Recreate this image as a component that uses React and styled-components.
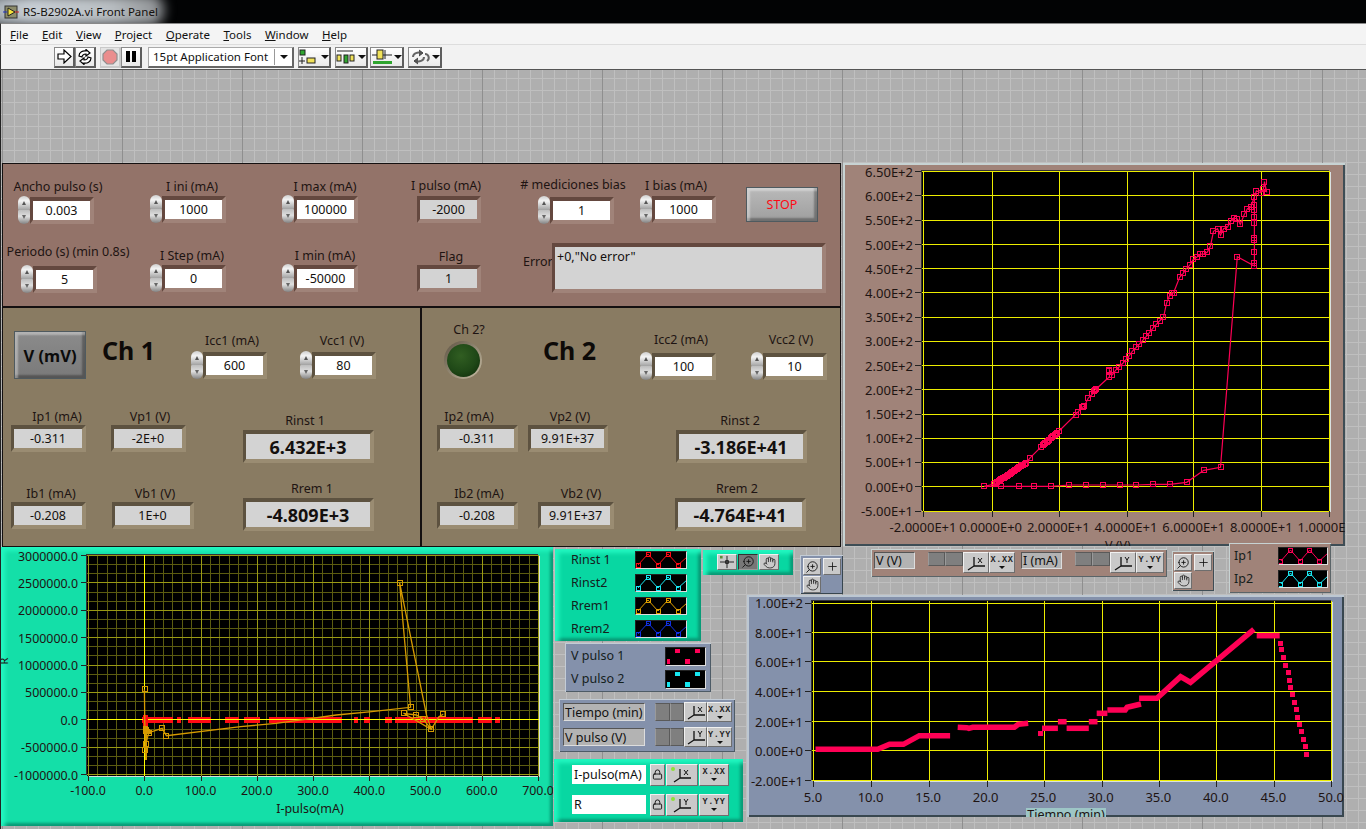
import React from "react";
import styled, { createGlobalStyle } from "styled-components";
import { Hand, ZoomIn, Plus, Lock } from "lucide-react";

const Global = createGlobalStyle`
  html, body { margin: 0; padding: 0; background: #000; overflow: hidden; }
  #root { width: 1366px; height: 829px; }
  * { box-sizing: border-box; }
`;

const FONT = `"Noto Sans", "Open Sans", sans-serif`;
const TRACE = "#ff0055";

const Screen = styled.div`
  width: 1366px; height: 829px; display: flex; flex-direction: column;
  font-family: ${FONT}; font-size: 12.5px; color: #1c1210; background: #000; overflow: hidden;
`;
const TitleBar = styled.div`
  position: relative; height: 23px; flex: none; background: #020304; display: flex; align-items: center;
  padding-left: 3px; gap: 4px; overflow: hidden;
`;
const TitleGlow = styled.div`
  position: absolute; left: -14px; top: -6px; width: 178px; height: 32px; border-radius: 14px;
  background: linear-gradient(90deg, #9fa7ad, #c8cfd6 25%, #b9bec2 70%, #8a8d90);
  filter: blur(6px);
`;
const TitleIcon = styled.svg` position: relative; flex: none; `;
const TitleText = styled.span`
  position: relative; font-size: 11.5px; color: #15110e; white-space: nowrap;
`;
const MenuBar = styled.div`
  height: 21px; flex: none; background: #f4f4f4; display: flex; align-items: center; padding-left: 9px; gap: 13.5px;
  border-left: 1px solid #333; border-top: 1px solid #888;
`;
const MenuItem = styled.span`
  font-size: 11.5px; color: #111; &::first-letter { text-decoration: underline; }
`;
const ToolBar = styled.div`
  height: 26px; flex: none; background: #f2f2f2; display: flex; align-items: center; padding-left: 53px;
  border-left: 1px solid #333; border-top: 1px solid #ddd; border-bottom: 1px solid #555;
`;
const ToolButton = styled.div`
  width: ${p => p.$w || 21}px; height: 21px; margin-left: ${p => p.$ml || 0}px; flex: none;
  background: ${p => p.$off ? "#e4e4e4" : "linear-gradient(#ffffff, #e9e9e9)"};
  border: 1px solid ${p => p.$off ? "#c9c9c9" : "#8a8a8a"}; border-right: 2px solid ${p => p.$off ? "#c9c9c9" : "#5e5e5e"}; border-bottom: 2px solid ${p => p.$off ? "#c9c9c9" : "#5e5e5e"};
  display: flex; align-items: center; justify-content: center;
`;
const FontSelect = styled.div`
  width: 146px; height: 21px; margin-left: 6px; flex: none; background: #fff; display: flex; align-items: center;
  border: 1px solid #aaa; border-right: 2px solid #666; border-bottom: 2px solid #666; padding-left: 4px; font-size: 11.5px; color: #111;
`;
const FontSelectText = styled.span` flex: 1; white-space: nowrap; `;
const FontSelectArrow = styled.span`
  width: 18px; height: 16px; border-left: 1px solid #999; display: flex; align-items: center; justify-content: center;
`;
const DownArrow = styled.span`
  width: 0; height: 0; border-left: 4px solid transparent; border-right: 4px solid transparent; border-top: 4px solid #111;
`;

const Canvas = styled.div`
  position: relative; flex: 1; background-color: #afafaf;
  border-left: 1px solid #222;
  background-image:
    linear-gradient(to right, #8f8f8f 1px, transparent 1px),
    linear-gradient(to right, #bfbfbf 1px, transparent 1px),
    linear-gradient(to bottom, #bfbfbf 1px, transparent 1px);
  background-size: 120px 120px, 12px 12px, 12px 12px;
  background-position: 1px 0, 1px 0, 0 8px;
`;
/* A panel is a floating object on the LabVIEW front-panel canvas: its place on the canvas is the content. */
const Panel = styled.div`
  position: absolute; left: ${p => p.$x - 1}px; top: ${p => p.$y - 70}px; width: ${p => p.$w}px; height: ${p => p.$h}px;
  background: ${p => p.$bg}; box-shadow: ${p => p.$shadow || "none"}; overflow: hidden;
`;
const raised = (l, d, n = 2) => `inset ${n}px ${n}px 0 ${l}, inset -${n}px -${n}px 0 ${d}`;
const greenEdge = `inset 5px 5px 4px -1px #22f7c0, inset -4px -4px 3px -1px #089a76`;
const BLACK_EDGE = "inset 0 0 0 1px #141010";

const ControlPanel = styled(Panel)`
  display: flex; flex-direction: column; padding-top: ${p => p.$pt}px;
`;
const ControlsRow = styled.div`
  display: grid; grid-template-columns: ${p => p.$cols}; height: ${p => p.$h}px; padding-left: ${p => p.$pl}px;
  align-items: ${p => p.$end ? "end" : "start"}; flex: none;
`;
const Control = styled.div`
  display: flex; flex-direction: column; align-items: center; width: ${p => p.$w}px;
  padding-top: ${p => p.$pt || 0}px; margin-left: ${p => p.$ml || 0}px; margin-bottom: ${p => p.$mb || 0}px;
`;
const ControlLabel = styled.span`
  height: 14px; line-height: 14px; white-space: nowrap; flex: none; color: #1e1412;
  transform: translate(${p => p.$dx || 0}px, ${p => p.$dy || 0}px);
  margin-bottom: ${p => p.$gap || 0}px;
`;
const ControlBody = styled.div` display: flex; align-items: center; flex: none; `;

const tones = {
  brown: ["#64483f", "#a08379"],
  olive: ["#5d5240", "#9a8c72"],
};
const FieldBox = styled.div`
  flex: none; width: ${p => p.$w + 7}px; height: ${p => p.$h + 8}px;
  border-style: solid; border-width: 4px 4px 4px 3px;
  border-color: ${p => tones[p.$tone][0]} ${p => tones[p.$tone][1]} ${p => tones[p.$tone][1]} ${p => tones[p.$tone][0]};
  background: ${p => p.$input ? "#ffffff" : "#d3d3d3"}; color: #14100e;
  font-size: ${p => p.$size || 12.5}px; font-weight: ${p => p.$bold ? 700 : 400};
  display: flex; align-items: ${p => p.$top ? "flex-start" : "center"}; justify-content: ${p => p.$top ? "flex-start" : "center"};
  padding: ${p => p.$top ? "1px 2px" : "0"}; white-space: nowrap;
`;
const SpinBox = styled.div` width: 12px; height: 28px; flex: none; display: flex; flex-direction: column; `;
const SpinUp = styled.div`
  height: 14px; border-radius: 6px 6px 1px 1px; background: linear-gradient(#cfcfcf, #f4f4f4 35%, #a2a2a2);
  display: flex; align-items: center; justify-content: center;
`;
const SpinDown = styled(SpinUp)`
  border-radius: 1px 1px 6px 6px; background: linear-gradient(#bdbdbd, #dfdfdf 45%, #828282);
`;
const TinyUp = styled.span`
  width: 0; height: 0; border-left: 2.5px solid transparent; border-right: 2.5px solid transparent; border-bottom: 4px solid #555;
`;
const TinyDown = styled.span`
  width: 0; height: 0; border-left: 2.5px solid transparent; border-right: 2.5px solid transparent; border-top: 4px solid #666;
`;
const BevelButton = styled.div`
  flex: none; width: ${p => p.$w}px; height: ${p => p.$h}px; margin-top: ${p => p.$mt || 0}px;
  border: 1px solid #4f5a5f; color: ${p => p.$color};
  background: ${p => p.$bg}; box-shadow: inset 3px 3px 2px rgba(255,255,255,.35), inset -3px -3px 2px rgba(0,0,0,.3);
  display: flex; align-items: center; justify-content: center;
  font-size: ${p => p.$size}px; font-weight: ${p => p.$bold ? 700 : 400};
`;
const ChannelTitle = styled.div`
  height: 38px; line-height: 38px; font-size: 25px; font-weight: 700; color: #0d0a08; margin-top: ${p => p.$mt || 0}px; white-space: nowrap;
`;
const ErrorBlock = styled.div` display: flex; align-items: flex-start; `;
const ErrorLabel = styled.span` width: 29px; flex: none; margin-top: 12px; line-height: 14px; color: #1e1412; `;
const Led = styled.div`
  width: 38px; height: 38px; border-radius: 50%; flex: none;
  background: linear-gradient(135deg, #5d5242, #c7bda4);
  display: flex; align-items: center; justify-content: center;
`;
const LedCore = styled.div`
  width: 33px; height: 33px; border-radius: 50%;
  background: radial-gradient(circle at 42% 36%, #315e22, #1f4817 55%, #0c2607);
`;

/* ---------- graphs ---------- */
const GraphGrid = styled.div`
  display: grid; grid-template-columns: ${p => p.$yw}px ${p => p.$pw}px; grid-template-rows: ${p => p.$ph}px auto auto;
  padding-top: ${p => p.$pt}px;
`;
const YAxis = styled.div`
  display: flex; flex-direction: column; justify-content: space-between; align-items: flex-end;
  padding: ${p => p.$a}px 9px ${p => p.$b}px 0; height: 100%;
`;
const YTick = styled.span`
  height: 0; display: flex; align-items: center; white-space: nowrap; font-size: ${p => p.$size || 13}px; color: #1e1412;
`;
const XAxis = styled.div`
  grid-column: 2; display: flex; justify-content: space-between; align-items: center; height: ${p => p.$h}px; padding: 0 1px;
`;
const XTick = styled.span`
  width: 0; display: flex; justify-content: center; white-space: nowrap; font-size: ${p => p.$size || 13}px; color: #1e1412;
`;
const AxisName = styled.div`
  grid-column: 2; display: flex; justify-content: center; line-height: 14px; height: 14px; margin-top: ${p => p.$mt || 0}px;
  transform: translateX(${p => p.$dx || 0}px); white-space: nowrap; color: #1e1412;
`;
const AxisNameText = styled.span` background: ${p => p.$bg || "transparent"}; padding: 0 1px; `;
const RotatedName = styled.span`
  position: absolute; left: 0; top: 110px; transform: rotate(-90deg); line-height: 8px; font-size: 11px; color: #1e1412;
`;
const PlotBox = styled.div`
  position: relative; width: ${p => p.$w}px; height: ${p => p.$h}px;
  background: #000; box-shadow: -1px -1px 0 #333, 1px 1px 0 #d9e0e0;
`;
const PlotSvg = styled.svg` display: block; overflow: visible; `;

/* ---------- legends and palettes ---------- */
const LegendPanel = styled(Panel)`
  display: flex; flex-direction: column; gap: ${p => p.$gap}px; padding: ${p => p.$pt}px 0 0 ${p => p.$pl}px;
`;
const LegendRow = styled.div`
  display: flex; justify-content: space-between; align-items: center; width: ${p => p.$w}px; flex: none;
  font-size: 12.5px; line-height: 1; color: #14201c; white-space: nowrap;
`;
const Swatch = styled.svg`
  flex: none; background: #000; display: block;
  border: 1px solid; border-color: #222 #ddd #ddd #222; shape-rendering: crispEdges;
`;
const RowStrip = styled.div`
  display: flex; align-items: center; gap: ${p => p.$gap || 0}px; height: ${p => p.$h}px; flex: none;
`;
const PaletteStrip = styled(Panel)`
  display: flex; gap: ${p => p.$gap || 0}px; padding: ${p => p.$pt}px 0 0 ${p => p.$pl}px; align-items: flex-start;
`;
const PaletteGrid = styled(Panel)`
  display: grid; grid-template-columns: 18px 18px; grid-auto-rows: 17px; column-gap: 2px; row-gap: 1px; padding: 3px 0 0 ${p => p.$pl}px;
`;
const NameBox = styled.div`
  flex: none; width: ${p => p.$w}px; height: ${p => p.$h}px; margin-left: ${p => p.$ml || 0}px; margin-right: ${p => p.$mr || 0}px;
  background: ${p => p.$white ? "#fff" : "#b3b3b3"}; border: ${p => p.$white ? "0" : "1px solid"}; border-color: #555 #ddd #ddd #555;
  font-size: 12.5px; color: #111; display: flex; align-items: center; padding-left: ${p => p.$white ? 2 : 1}px; white-space: nowrap; overflow: hidden;
`;
const DarkButton = styled.div`
  flex: none; width: ${p => p.$w}px; height: ${p => p.$h}px;
  background: #7f7f7f; border: 1px solid #5a5a5a; border-left-color: #9a9a9a;
`;
const ToolTile = styled.div`
  position: relative; flex: none; width: ${p => p.$w}px; height: ${p => p.$h}px; margin-right: ${p => p.$mr || 0}px;
  background: ${p => p.$down ? "#777" : "#c9c9c9"}; color: #111;
  border: 1px solid; border-color: ${p => p.$down ? "#333 #999 #999 #333" : "#f0f0f0 #6e6e6e #6e6e6e #f0f0f0"};
  display: flex; flex-direction: column; align-items: center; justify-content: center; overflow: hidden;
`;
const FormatText = styled.span`
  font-family: "Liberation Mono", monospace; font-size: 8.5px; line-height: 9px; letter-spacing: .6px; color: #222; font-weight: 700;
`;
const SmallTri = styled.span`
  width: 0; height: 0; margin-top: 1px; border-left: 3px solid transparent; border-right: 3px solid transparent; border-top: 3px solid #111;
`;
const GreenDot = styled.span`
  position: absolute; left: 4px; top: 2px; width: 4px; height: 4px; border-radius: 50%; background: #8fe03a;
`;
const Magnifier = styled(ZoomIn)` transform: scaleX(-1); `;

/* ---------- small drawings ---------- */
const Axes = ({ letter }) => (
  <svg width="22" height="16" viewBox="0 0 22 16">
    <path d="M9 2V11M9 11H20M9 11L3 15" fill="none" stroke="#111" strokeWidth="1.3" />
    {letter === "X"
      ? <path d="M13 3L17 8M17 3L13 8" stroke="#111" strokeWidth="1" />
      : <path d="M13 2L15 5L17 2M15 5V8" fill="none" stroke="#111" strokeWidth="1" />}
  </svg>
);
const Crosshair = () => (
  <svg width="18" height="16" viewBox="0 0 18 16">
    <rect x="1" y="1" width="3" height="3" fill="#5e8a3a" />
    <path d="M1 8H17M9 1V15" stroke="#111" strokeWidth="1" /><rect x="7.5" y="6.5" width="3" height="3" fill="none" stroke="#111" />
  </svg>
);

/* ---------- composed widgets ---------- */
function Numeric({ label, dx, dy, gap, pt, ml, mb, w = 57, h = 19, v, spin, tone, big }) {
  return (
    <Control $w={(spin ? 12 : 0) + w + 7} $pt={pt} $ml={ml} $mb={mb}>
      <ControlLabel $dx={dx} $dy={dy} $gap={gap}>{label}</ControlLabel>
      <ControlBody>
        {spin && <SpinBox><SpinUp><TinyUp /></SpinUp><SpinDown><TinyDown /></SpinDown></SpinBox>}
        <FieldBox $w={w} $h={h} $tone={tone} $input={spin} $bold={big} $size={big ? 18 : undefined}>{v}</FieldBox>
      </ControlBody>
    </Control>
  );
}

/* ---------- traces ---------- */
const dense = (a, b, n) => [...Array(n)].map((_, i) => [a[0] + (b[0] - a[0]) * i / (n - 1), a[1] + (b[1] - a[1]) * i / (n - 1)]);
const RP = { x: 922, y: 171, w: 408, h: 340 };
const rpPts = (arr) => arr.map(([a, b]) => [840 + a / 2.98 - RP.x, 160 + b / 3 - RP.y]);
const rightUp = rpPts([
  [430,979], ...dense([460,972],[555,908],24), [567,893], ...dense([600,860],[652,814],14),
  [702,764],[710,755],[722,742],[725,740],[728,738],[740,714],[752,703],...dense([758,692],[764,686],4),
  [803,650],[803,634],[803,630],[812,644],[821,631],[832,620],[843,610],[853,598],[862,587],[871,574],[883,562],[892,553],[902,541],[913,529],
  [922,518],[932,505],[943,493],[953,482],[964,472],[973,430],[982,407],[990,399],[994,398],[1012,352],[1023,340],[1032,326],[1044,314],[1053,298],
  [1063,292],[1074,282],[1083,283],[1095,276],[1104,257],[1113,214],[1125,206],[1134,226],[1143,206],[1155,201],[1164,184],[1173,174],
  [1184,177],[1193,193],[1205,163],[1214,146],[1224,142],[1235,110],[1241,92],[1254,98],[1262,86],[1265,65],[1272,97],
]);
const rightDown = rpPts([
  [1235,110],[1235,136],[1235,150],[1235,170],[1235,190],[1235,234],[1235,240],[1235,275],[1235,308],[1235,318],[1184,290],
  [1134,922],[1084,931],[1033,967],[983,973],[934,973],[883,975],[834,975],[783,975],[732,975],[682,975],[630,979],[579,979],[532,979],[481,979],[430,979],
]);
const str = (a) => a.map(p => p.map(n => n.toFixed(1)).join(",")).join(" ");

function RightPlot() {
  const ys = [...Array(15)].map((_, i) => Math.round(24.26 * i));
  const xs = [1, 70, 137, 205, 271, 339, 407];
  return (
    <PlotSvg width={RP.w} height={RP.h}>
      <g shapeRendering="crispEdges">
        {ys.map((y, i) => <line key={i} x1="0" x2={RP.w} y1={y + .5} y2={y + .5} stroke="#ecec00" />)}
        {ys.map((y, i) => <line key={"t" + i} x1="-7" x2="-1" y1={y + .5} y2={y + .5} stroke="#222" />)}
        {xs.map((x, i) => <line key={i} x1={x + .5} x2={x + .5} y1="0" y2={RP.h} stroke="#ecec00" />)}
        {xs.map((x, i) => <line key={"t" + i} x1={x + .5} x2={x + .5} y1={RP.h} y2={RP.h + 6} stroke="#222" />)}
      </g>
      <polyline points={str(rightUp)} fill="none" stroke={TRACE} strokeWidth="1.2" />
      <polyline points={str(rightDown)} fill="none" stroke={TRACE} strokeWidth="1.2" />
      {[...rightUp, ...rightDown].map(([x, y], i) => (
        <rect key={i} x={Math.round(x) - 2.5} y={Math.round(y) - 2.5} width="5" height="5" fill="none" stroke={TRACE} shapeRendering="crispEdges" />
      ))}
    </PlotSvg>
  );
}

const LP = { x: 87, y: 555, w: 452, h: 221 };
const lx = (z) => z / 2.825 - LP.x;
const ly = (z) => 545 + z / 3 - LP.y;
const lpts = (a) => a.map(([x, y]) => [lx(x), ly(y)]);
const orangeA = lpts([[408,433],[410,616],[412,598],[420,563],[458,550],[470,572],[680,545],[780,535],[950,510],[1050,500],[1160,487],[1150,370],[1140,250],[1129,113],[1205,510],[1218,553],[1196,523],[1176,510],[1140,505],[1218,553],[1240,515],[1252,508]]);
const orangeMarks = lpts([[410,433],[412,598],[410,616],[420,563],[458,550],[470,572],[1160,487],[1129,113],[1140,505],[1176,510],[1218,553],[1252,508],[1196,523]]);
const bands = [[400,490],[500,510],[530,595],[635,675],[690,735],[760,965],[1000,1012],[1028,1045],[1087,1108],[1115,1335],[1350,1390],[1398,1412]];

function LeftPlot() {
  const vMajor = [...Array(9)].map((_, i) => Math.round(56.25 * i) + 1.5);
  const hMajor = [...Array(9)].map((_, i) => Math.round(27.4 * i) + .5);
  const vMinor = [...Array(48)].map((_, i) => Math.round(9.375 * i) + 1.5);
  const hMinor = [...Array(24)].map((_, i) => Math.round(9.133 * i) + .5);
  const zeroX = vMajor[1], zeroY = hMajor[6];
  return (
    <PlotSvg width={LP.w} height={LP.h} shapeRendering="crispEdges">
      {vMinor.map((x, i) => <line key={i} x1={x} x2={x} y1="0" y2={LP.h} stroke="#5c5c10" />)}
      {hMinor.map((y, i) => <line key={i} x1="0" x2={LP.w} y1={y} y2={y} stroke="#5c5c10" />)}
      {vMajor.map((x, i) => <line key={i} x1={x} x2={x} y1="0" y2={LP.h} stroke="#9a9a14" />)}
      {hMajor.map((y, i) => <line key={i} x1="0" x2={LP.w} y1={y} y2={y} stroke="#9a9a14" />)}
      {hMajor.map((y, i) => <line key={"t" + i} x1="-6" x2="-1" y1={y} y2={y} stroke="#222" />)}
      {vMajor.map((x, i) => <line key={"t" + i} x1={x} x2={x} y1={LP.h} y2={LP.h + 5} stroke="#222" />)}
      {bands.map(([a, b], i) => (
        <rect key={i} x={lx(a)} y={zeroY - 3} width={(b - a) / 2.825} height="6" fill="#ff0a14" />
      ))}
      <line x1={zeroX} x2={zeroX} y1="0" y2={LP.h} stroke="#ffff00" />
      <line x1="0" x2={LP.w} y1={zeroY} y2={zeroY} stroke="#ffff00" />
      <rect x={zeroX - 2} y={zeroY - 5} width="5" height="11" fill="#ff0a14" />
      <path d={`M${zeroX - 2} ${zeroY + 6}h5l4 8h-9z`} fill="#d69a00" />
      <rect x={zeroX} y={zeroY + 6} width="2" height="34" fill="#d69a00" />
      <polyline points={str(orangeA)} fill="none" stroke="#d69a00" strokeWidth="1.3" shapeRendering="auto" />
      {orangeMarks.map(([x, y], i) => (
        <rect key={i} x={Math.round(x) - 2.5} y={Math.round(y) - 2.5} width="5" height="5" fill="none" stroke="#d69a00" />
      ))}
    </PlotSvg>
  );
}

const TP = { x: 812, y: 601, w: 520, h: 180 };
const tp = (zx, zy) => [745 + zx / 2.525 - TP.x, 595 + zy / 3 - TP.y];
const timeSegs = [
  [[178,463],[335,463],[365,448],[400,448],[440,422],[518,422]],
  [[537,397],[560,398],[565,400],[575,397],[680,397],[690,388],[715,385]],
  [[750,400],[790,400]],[[790,380],[812,380]],[[812,400],[868,400]],[[868,380],[890,380]],[[888,355],[915,355]],
  [[915,345],[960,345],[965,337],[1000,327]],[[995,310],[1040,310],[1100,245],[1125,262],[1285,103]],[[1292,122],[1350,122]],
];
const timeDots = [[745,415],[1352,143],[1354,163],[1359,187],[1364,209],[1370,232],[1373,254],[1377,277],[1382,298],[1387,320],[1392,343],[1395,365],[1400,388],[1404,409],[1410,431],[1415,454],[1417,476]];

function TimePlot() {
  const ys = [2, 31, 60, 90, 120, 149, 179];
  const xs = [1, 59, 117, 175, 232, 290, 347, 404, 462, 519];
  return (
    <PlotSvg width={TP.w} height={TP.h}>
      <g shapeRendering="crispEdges">
        {ys.map((y, i) => <line key={i} x1="0" x2={TP.w} y1={y + .5} y2={y + .5} stroke="#ecec00" />)}
        {ys.map((y, i) => <line key={"t" + i} x1="-7" x2="-1" y1={y + .5} y2={y + .5} stroke="#222" />)}
        {xs.map((x, i) => <line key={i} x1={x + .5} x2={x + .5} y1="0" y2={TP.h} stroke="#ecec00" />)}
        {xs.map((x, i) => <line key={"t" + i} x1={x + .5} x2={x + .5} y1={TP.h} y2={TP.h + 6} stroke="#222" />)}
      </g>
      {timeSegs.map((s, i) => (
        <polyline key={i} points={str(s.map(([a, b]) => tp(a, b)))} fill="none" stroke={TRACE} strokeWidth="5.5" />
      ))}
      {timeDots.map(([a, b], i) => {
        const [x, y] = tp(a, b);
        return <rect key={i} x={Math.round(x) - 2} y={Math.round(y) - 2} width="5" height="5" fill={TRACE} shapeRendering="crispEdges" />;
      })}
    </PlotSvg>
  );
}

function ZigSwatch({ w = 52, color }) {
  const k = (w - 2) / 50;
  const pts = [[2, 13], [12, 2], [22, 13], [32, 2], [42, 13], [51, 5]].map(([a, b]) => [a * k, b]);
  return (
    <Swatch width={w} height="18" viewBox={`0 0 ${w - 2} 16`}>
      <polyline points={str(pts)} fill="none" stroke={color} shapeRendering="auto" />
      {pts.slice(0, 5).map(([a, b], i) => <rect key={i} x={a - 2} y={b - 2} width="4" height="4" fill="none" stroke={color} />)}
    </Swatch>
  );
}
function DotSwatch({ color }) {
  return (
    <Swatch width="41" height="19" viewBox="0 0 39 17">
      <rect x="9" y="1" width="5" height="4" fill={color} />
      <rect x="29" y="1" width="5" height="4" fill={color} />
      <rect x="1" y="11" width="3" height="5" fill={color} />
      <rect x="19" y="11" width="5" height="5" fill={color} />
    </Swatch>
  );
}
function ScaleStrip({ name, letter }) {
  const f = letter === "X" ? "X.XX" : "Y.YY";
  return (
    <RowStrip $h={20}>
      <NameBox $w={82} $h={18} $mr={10}>{name}</NameBox>
      <DarkButton $w={15} $h={18} />
      <DarkButton $w={14} $h={18} />
      <ToolTile $w={23} $h={20}><Axes letter={letter} /></ToolTile>
      <ToolTile $w={25} $h={20}><FormatText>{f}</FormatText><SmallTri /></ToolTile>
    </RowStrip>
  );
}
function CursorStrip({ name, letter }) {
  const f = letter === "X" ? "X.XX" : "Y.YY";
  return (
    <RowStrip $h={23}>
      <NameBox $w={74} $h={19} $white $mr={4}>{name}</NameBox>
      <ToolTile $w={15} $h={22} $mr={1}><Lock size={11} strokeWidth={2} /></ToolTile>
      <ToolTile $w={32} $h={22} $mr={1}><GreenDot /><Axes letter={letter} /></ToolTile>
      <ToolTile $w={30} $h={22}><FormatText>{f}</FormatText><SmallTri /></ToolTile>
    </RowStrip>
  );
}
function ZoomTiles() {
  return (
    <>
      <ToolTile $w={18} $h={17}><Magnifier size={14} strokeWidth={1.5} /></ToolTile>
      <ToolTile $w={18} $h={17}><Plus size={13} strokeWidth={1.5} /></ToolTile>
      <ToolTile $w={18} $h={17}><Hand size={13} strokeWidth={1.4} /></ToolTile>
    </>
  );
}
function BrownScale({ name, letter, w }) {
  return (
    <>
      <NameBox $w={41} $h={17} $mr={13}>{name}</NameBox>
      <DarkButton $w={17} $h={14} />
      <DarkButton $w={18} $h={14} />
      <ToolTile $w={26} $h={21}><Axes letter={letter} /></ToolTile>
      <ToolTile $w={w} $h={21}><FormatText>{letter === "X" ? "X.XX" : "Y.YY"}</FormatText><SmallTri /></ToolTile>
    </>
  );
}

const rightYLabels = ["6.50E+2","6.00E+2","5.50E+2","5.00E+2","4.50E+2","4.00E+2","3.50E+2","3.00E+2","2.50E+2","2.00E+2","1.50E+2","1.00E+2","5.00E+1","0.00E+0","-5.00E+1"];
const rightXLabels = ["-2.0000E+1","0.0000E+0","2.0000E+1","4.0000E+1","6.0000E+1","8.0000E+1","1.0000E+2"];
const leftYLabels = ["3000000.0","2500000.0","2000000.0","1500000.0","1000000.0","500000.0","0.0","-500000.0","-1000000.0"];
const leftXLabels = ["-100.0","0.0","100.0","200.0","300.0","400.0","500.0","600.0","700.0"];
const timeYLabels = ["1.00E+2","8.00E+1","6.00E+1","4.00E+1","2.00E+1","0.00E+0","-2.00E+1"];
const timeXLabels = ["5.0","10.0","15.0","20.0","25.0","30.0","35.0","40.0","45.0","50.0"];

const BROWN = { tone: "brown", spin: true };
const OLIVE = { tone: "olive" };
const BIG = { tone: "olive", w: 124, h: 25, big: true };

export default function App() {
  return (
    <Screen>
      <Global />
      <TitleBar>
        <TitleGlow />
        <TitleIcon width="16" height="16" viewBox="0 0 16 16">
          <rect x="2" y="2" width="12" height="12" fill="#8c8c6a" stroke="#333" />
          <path d="M5 4L12 8L5 12Z" fill="#f5e23a" stroke="#222" />
          <path d="M0 8H4" stroke="#2030c0" /><path d="M12 8H16" stroke="#d02020" />
        </TitleIcon>
        <TitleText>RS-B2902A.vi Front Panel</TitleText>
      </TitleBar>
      <MenuBar>
        {["File", "Edit", "View", "Project", "Operate", "Tools", "Window", "Help"].map(m => <MenuItem key={m}>{m}</MenuItem>)}
      </MenuBar>
      <ToolBar>
        <ToolButton>
          <svg width="16" height="15" viewBox="0 0 16 15"><path d="M2 5H8V1L15 7.5L8 14V10H2Z" fill="#fff" stroke="#000" strokeWidth="1.2" /></svg>
        </ToolButton>
        <ToolButton>
          <svg width="18" height="16" viewBox="0 0 18 16" fill="none" stroke="#000" strokeWidth="1.2">
            <path d="M3 7C3 3 7 1.5 10 2V0.5L14 4L10 7V5C7 5 6 7 6 8L3 7Z" fill="#fff" />
            <path d="M15 9C15 13 11 14.5 8 14V15.5L4 12L8 9V11C11 11 12 9 12 8L15 9Z" fill="#fff" />
          </svg>
        </ToolButton>
        <ToolButton $off $ml={4}>
          <svg width="16" height="16" viewBox="0 0 16 16"><path d="M5 1H11L15 5V11L11 15H5L1 11V5Z" fill="#ea8d8d" stroke="#8f8f8f" strokeWidth="1.2" /></svg>
        </ToolButton>
        <ToolButton>
          <svg width="12" height="13" viewBox="0 0 12 13"><rect x="1" y="1" width="4" height="11" /><rect x="7" y="1" width="4" height="11" /></svg>
        </ToolButton>
        <FontSelect>
          <FontSelectText>15pt Application Font</FontSelectText>
          <FontSelectArrow><DownArrow /></FontSelectArrow>
        </FontSelect>
        <ToolButton $w={33} $ml={4}>
          <svg width="22" height="16" viewBox="0 0 22 16">
            <rect x="1" y="1" width="5" height="5" fill="#2fa52f" stroke="#222" /><path d="M3 8V15M0 12H6" stroke="#222" />
            <rect x="8" y="9" width="8" height="5" fill="#f1e25a" stroke="#222" />
          </svg>
          <DownArrow />
        </ToolButton>
        <ToolButton $w={33} $ml={4}>
          <svg width="22" height="16" viewBox="0 0 22 16">
            <path d="M1 2H17" stroke="#222" /><rect x="1" y="6" width="4" height="6" fill="#f1e25a" stroke="#222" />
            <rect x="8" y="6" width="4" height="8" fill="#2fa52f" stroke="#222" /><rect x="14" y="6" width="4" height="6" fill="#f1e25a" stroke="#222" />
          </svg>
          <DownArrow />
        </ToolButton>
        <ToolButton $w={34} $ml={2}>
          <svg width="23" height="16" viewBox="0 0 23 16">
            <rect x="2" y="12" width="19" height="3" fill="#2fa52f" /><rect x="6" y="1" width="6" height="9" fill="#f1e25a" stroke="#222" />
            <path d="M1 6H6M12 6H21M14 1V10" stroke="#222" />
          </svg>
          <DownArrow />
        </ToolButton>
        <ToolButton $w={34} $ml={4}>
          <svg width="22" height="16" viewBox="0 0 22 16" fill="none" stroke="#666" strokeWidth="2">
            <path d="M3 8C3 4 8 3 11 4M14 8C14 12 9 13 6 12" /><path d="M9 1L13 4L9 7M8 9L4 12L8 15" fill="#555" stroke="#444" strokeWidth="1" />
            <path d="M15 5C19 5 20 10 17 12" />
          </svg>
          <DownArrow />
        </ToolButton>
      </ToolBar>

      <Canvas>
        {/* Pulse settings panel */}
        <ControlPanel $x={2} $y={163} $w={839} $h={144} $bg="#937369" $shadow={BLACK_EDGE} $pt={17}>
          <ControlsRow $h={63} $pl={16} $cols="132px 132px 134px 122px 102px 106px auto">
            <Numeric {...BROWN} label="Ancho pulso (s)" dx={2} gap={2} v="0.003" />
            <Numeric {...BROWN} label="I ini (mA)" dx={4} gap={1} v="1000" />
            <Numeric {...BROWN} label="I max (mA)" dx={5} gap={1} v="100000" />
            <Numeric tone="brown" label="I pulso (mA)" dx={-3} dy={-1} gap={2} ml={1} v="-2000" />
            <Numeric {...BROWN} label="# mediciones bias" dx={-3} dy={-2} gap={2} v="1" />
            <Numeric {...BROWN} label="I bias (mA)" dx={-2} dy={-1} gap={1} v="1000" />
            <BevelButton $w={72} $h={35} $mt={7} $color="#ff0a14" $size={12.5} $bg="linear-gradient(#b9b9b9, #9f9f9f)">STOP</BevelButton>
          </ControlsRow>
          <ControlsRow $h={50} $end $pl={19} $cols="129px 132px 134px 107px auto">
            <Numeric {...BROWN} label="Periodo (s) (min 0.8s)" dx={9} gap={6} v="5" />
            <Numeric {...BROWN} label="I Step (mA)" dx={4} gap={1} mb={1} v="0" />
            <Numeric {...BROWN} label="I min (mA)" dx={5} gap={1} mb={1} v="-50000" />
            <Numeric tone="brown" label="Flag" dx={2} gap={1} mb={1} ml={1} v="1" />
            <ErrorBlock>
              <ErrorLabel>Error</ErrorLabel>
              <FieldBox $w={267} $h={42} $tone="brown" $top>+0,"No error"</FieldBox>
            </ErrorBlock>
          </ControlsRow>
        </ControlPanel>

        {/* Channel 1 */}
        <ControlPanel $x={2} $y={307} $w={419} $h={240} $bg="#897b62" $shadow={BLACK_EDGE} $pt={24}>
          <ControlsRow $h={79} $pl={12} $cols="88px 89px 109px auto">
            <BevelButton $w={72} $h={48} $color="#0b0b0b" $size={16.5} $bold $bg="linear-gradient(#8b8b8b, #7a7a7a)">V (mV)</BevelButton>
            <ChannelTitle>Ch 1</ChannelTitle>
            <Numeric tone="olive" spin label="Icc1 (mA)" dx={3} gap={3} pt={3} v="600" />
            <Numeric tone="olive" spin label="Vcc1 (V)" dx={4} gap={3} pt={3} v="80" />
          </ControlsRow>
          <ControlsRow $h={72} $pl={9} $cols="100px 132px auto">
            <Numeric {...OLIVE} w={68} label="Ip1 (mA)" dx={8.5} gap={1} v="-0.311" />
            <Numeric {...OLIVE} w={68} label="Vp1 (V)" dx={1.5} gap={1} v="-2E+0" />
            <Numeric {...BIG} label="Rinst 1" dx={-3.5} gap={2} pt={4} v="6.432E+3" />
          </ControlsRow>
          <ControlsRow $h={65} $pl={9} $cols="101px 131px auto">
            <Numeric {...OLIVE} w={68} label="Ib1 (mA)" dx={2.5} gap={1} pt={5} v="-0.208" />
            <Numeric {...OLIVE} w={75} label="Vb1 (V)" dx={2} gap={1} pt={5} v="1E+0" />
            <Numeric {...BIG} label="Rrem  1" dx={3.5} gap={2} v="-4.809E+3" />
          </ControlsRow>
        </ControlPanel>

        {/* Channel 2 */}
        <ControlPanel $x={421} $y={307} $w={420} $h={240} $bg="#897b62" $shadow={BLACK_EDGE} $pt={16}>
          <ControlsRow $h={87} $pl={23} $cols="99px 97px 111px auto">
            <Control $w={38}>
              <ControlLabel $dx={6} $gap={4}>Ch 2?</ControlLabel>
              <Led><LedCore /></Led>
            </Control>
            <ChannelTitle $mt={8}>Ch 2</ChannelTitle>
            <Numeric tone="olive" spin label="Icc2 (mA)" dx={3} gap={5} pt={10} v="100" />
            <Numeric tone="olive" spin label="Vcc2 (V)" dx={2} gap={5} pt={10} v="10" />
          </ControlsRow>
          <ControlsRow $h={72} $pl={16} $cols="91px 148px auto">
            <Numeric {...OLIVE} w={74} label="Ip2 (mA)" dx={-8.5} gap={1} v="-0.311" />
            <Numeric {...OLIVE} w={73} label="Vp2 (V)" dx={2} gap={1} v="9.91E+37" />
            <Numeric {...BIG} label="Rinst 2" dx={-1.5} gap={2} pt={4} v="-3.186E+41" />
          </ControlsRow>
          <ControlsRow $h={65} $pl={16} $cols="101px 137px auto">
            <Numeric {...OLIVE} w={74} label="Ib2 (mA)" dx={1.5} gap={1} pt={5} v="-0.208" />
            <Numeric {...OLIVE} w={69} label="Vb2 (V)" dx={5} gap={1} pt={5} v="9.91E+37" />
            <Numeric {...BIG} label="Rrem 2" dx={-3.5} gap={2} v="-4.764E+41" />
          </ControlsRow>
        </ControlPanel>

        {/* Right XY graph */}
        <Panel $x={843} $y={163} $w={502} $h={383} $bg="#a08379" $shadow={raised("#c7d3d3", "#3e4d55")}>
          <GraphGrid $yw={79} $pw={RP.w} $ph={RP.h} $pt={8}>
            <YAxis $a={1} $b={0}>{rightYLabels.map(t => <YTick key={t}>{t}</YTick>)}</YAxis>
            <PlotBox $w={RP.w} $h={RP.h}><RightPlot /></PlotBox>
            <XAxis $h={32}>{rightXLabels.map(t => <XTick key={t}>{t}</XTick>)}</XAxis>
            <AxisName $dx={-8} $mt={-4}><AxisNameText>V (V)</AxisNameText></AxisName>
          </GraphGrid>
        </Panel>

        {/* Left green graph */}
        <Panel $x={1} $y={547} $w={552} $h={279} $bg="#14dfa8" $shadow={greenEdge}>
          <GraphGrid $yw={86} $pw={LP.w} $ph={LP.h} $pt={8}>
            <YAxis $a={1} $b={1}>{leftYLabels.map(t => <YTick key={t} $size={12.4}>{t}</YTick>)}</YAxis>
            <PlotBox $w={LP.w} $h={LP.h}><LeftPlot /></PlotBox>
            <XAxis $h={28}>{leftXLabels.map(t => <XTick key={t} $size={12.4}>{t}</XTick>)}</XAxis>
            <AxisName $dx={-3} $mt={-2}><AxisNameText>I-pulso(mA)</AxisNameText></AxisName>
          </GraphGrid>
          <RotatedName>R</RotatedName>
        </Panel>

        {/* Plot legend, green */}
        <LegendPanel $x={555} $y={549} $w={146} $h={92} $bg="#08d7a2" $shadow={greenEdge} $gap={5} $pt={2} $pl={16}>
          {[["Rinst 1", "#ff0a14"], ["Rinst2", "#19e6f0"], ["Rrem1", "#e0a000"], ["Rrem2", "#1030e0"]].map(([t, c]) => (
            <LegendRow key={t} $w={116}>{t}<ZigSwatch color={c} /></LegendRow>
          ))}
        </LegendPanel>
        <PaletteStrip $x={703} $y={550} $w={90} $h={25} $bg="#08d7a2" $shadow={greenEdge} $gap={1} $pt={4} $pl={14}>
          <ToolTile $w={20} $h={16}><Crosshair /></ToolTile>
          <ToolTile $w={20} $h={16} $down><Magnifier size={14} strokeWidth={1.5} /></ToolTile>
          <ToolTile $w={20} $h={16}><Hand size={13} strokeWidth={1.4} /></ToolTile>
        </PaletteStrip>

        {/* V pulso legend */}
        <LegendPanel $x={565} $y={643} $w={146} $h={49} $bg="#8491ab" $shadow={raised("#c3ccd6", "#4d5b66", 1)} $gap={4} $pt={4} $pl={6}>
          {[["V pulso 1", TRACE], ["V pulso 2", "#16e6f0"]].map(([t, c]) => (
            <LegendRow key={t} $w={135}>{t}<DotSwatch color={c} /></LegendRow>
          ))}
        </LegendPanel>

        {/* Time graph scale legend */}
        <LegendPanel $x={559} $y={699} $w={176} $h={53} $bg="#8491ab" $shadow={raised("#c3ccd6", "#4d5b66", 1)} $gap={5} $pt={3} $pl={4}>
          <ScaleStrip name="Tiempo (min)" letter="X" />
          <ScaleStrip name="V pulso (V)" letter="Y" />
        </LegendPanel>

        {/* Green scale legend */}
        <LegendPanel $x={554} $y={759} $w={189} $h={63} $bg="#08d7a2" $shadow={greenEdge} $gap={7} $pt={4} $pl={18}>
          <CursorStrip name="I-pulso(mA)" letter="X" />
          <CursorStrip name="R" letter="Y" />
        </LegendPanel>

        {/* Zoom palette of the time graph */}
        <PaletteGrid $x={800} $y={555} $w={43} $h={39} $bg="#8491ab" $shadow={raised("#c3ccd6", "#38464f", 1)} $pl={3}>
          <ZoomTiles />
        </PaletteGrid>

        {/* Scale legend of the XY graph */}
        <PaletteStrip $x={871} $y={549} $w={296} $h={28} $bg="#a08379" $shadow={raised("#c7d3d3", "#5a6468", 1)} $pt={3} $pl={3}>
          <BrownScale name="V (V)" letter="X" w={26} />
          <NameBox $w={41} $h={17} $ml={6} $mr={13}>I (mA)</NameBox>
          <DarkButton $w={17} $h={14} />
          <DarkButton $w={18} $h={14} />
          <ToolTile $w={26} $h={21}><Axes letter="Y" /></ToolTile>
          <ToolTile $w={28} $h={21}><FormatText>Y.YY</FormatText><SmallTri /></ToolTile>
        </PaletteStrip>

        <PaletteGrid $x={1172} $y={551} $w={42} $h={40} $bg="#a08379" $shadow={raised("#c7d3d3", "#3e4d55", 1)} $pl={2}>
          <ZoomTiles />
        </PaletteGrid>

        <LegendPanel $x={1229} $y={543} $w={102} $h={50} $bg="#a08379" $shadow={raised("#c7d3d3", "#5a6468", 1)} $gap={5} $pt={4} $pl={5}>
          {[["Ip1", TRACE], ["Ip2", "#19e6f0"]].map(([t, c]) => (
            <LegendRow key={t} $w={94}>{t}<ZigSwatch w={50} color={c} /></LegendRow>
          ))}
        </LegendPanel>

        {/* Time graph */}
        <Panel $x={747} $y={595} $w={597} $h={222} $bg="#8491ab" $shadow={raised("#bcc7d2", "#39474f")}>
          <GraphGrid $yw={65} $pw={TP.w} $ph={TP.h} $pt={6}>
            <YAxis $a={2} $b={0}>{timeYLabels.map(t => <YTick key={t}>{t}</YTick>)}</YAxis>
            <PlotBox $w={TP.w} $h={TP.h}><TimePlot /></PlotBox>
            <XAxis $h={32}>{timeXLabels.map(t => <XTick key={t}>{t}</XTick>)}</XAxis>
            <AxisName $dx={-6} $mt={-5}><AxisNameText $bg="#9dc6c6">Tiempo (min)</AxisNameText></AxisName>
          </GraphGrid>
        </Panel>
      </Canvas>
    </Screen>
  );
}
